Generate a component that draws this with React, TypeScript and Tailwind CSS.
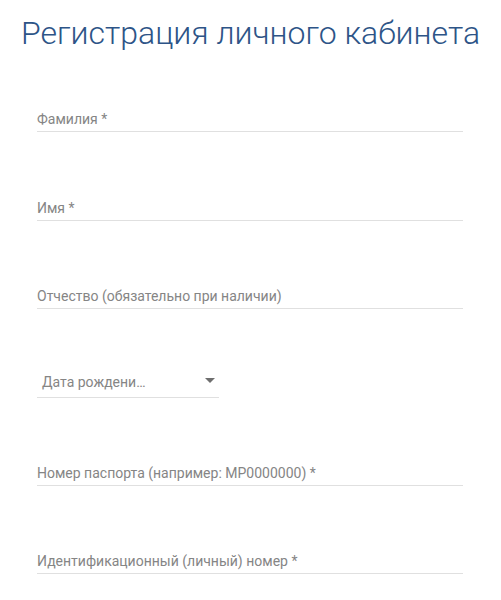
function Field({ label, className }: { label: string; className: string }) {
  return (
    <div className={`border-b border-[#e0e0e0] pb-[2px] ${className}`}>
      <div className="text-[14px] leading-5 text-[#858585]">{label}</div>
    </div>
  );
}

export default function App() {
  return (
    <div className="min-h-screen bg-white font-['Roboto',sans-serif]">
      <h1 className="pt-[15px] text-center text-[32px] leading-[36px] font-light text-[#2d5487]">
        Регистрация личного кабинета
      </h1>
      <form className="flex w-[426px] flex-col pl-[37px] box-content">
        <Field label="Фамилия *" className="mt-[58px]" />
        <Field label="Имя *" className="mt-[65.5px]" />
        <Field label="Отчество (обязательно при наличии)" className="mt-[65.5px]" />
        <div className="mt-[63px] flex w-[182px] items-center justify-between border-b border-[#e0e0e0] pb-[5px] pl-[5px] pr-[4px]">
          <span className="text-[14px] leading-5 text-[#858585]">Дата рождени…</span>
          <svg width="10" height="5" viewBox="0 0 10 5" className="mb-[4px]">
            <path d="M0 0h10L5 5z" fill="#6e6e6e" />
          </svg>
        </div>
        <Field label="Номер паспорта (например: MP0000000) *" className="mt-[65px]" />
        <Field label="Идентификационный (личный) номер *" className="mt-[65px]" />
      </form>
    </div>
  );
}
